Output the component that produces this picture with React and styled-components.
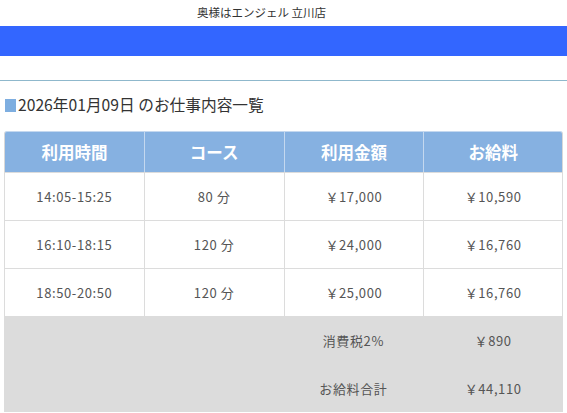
import React from "react";
import styled, { createGlobalStyle } from "styled-components";

const GlobalStyle = createGlobalStyle`
  body {
    margin: 0;
    background: #fff;
    font-family: "Noto Sans CJK JP", "Noto Sans", sans-serif;
    color: #333;
  }
`;

const ShopTitle = styled.div`
  height: 26px;
  padding-right: 44px;
  line-height: 24px;
  text-align: center;
  font-size: 11.5px;
  color: #333;
`;

const BlueBar = styled.div`
  height: 30px;
  background: #3366ff;
`;

const Divider = styled.hr`
  margin: 24px 0 0;
  border: 0;
  border-top: 1px solid #8fb8cc;
`;

const Heading = styled.h2`
  display: flex;
  align-items: center;
  margin: 13px 0 0 5px;
  font-size: 15.7px;
  font-weight: normal;
  line-height: 22px;
  color: #333;
`;

const Square = styled.span`
  width: 11px;
  height: 13px;
  margin-right: 2px;
  background: #7eaee0;
`;

const Table = styled.table`
  margin: 15px 0 0 4px;
  width: 559px;
  border-collapse: separate;
  border-spacing: 0;
  table-layout: fixed;
`;

const Th = styled.th`
  height: 40px;
  padding: 0;
  background: #86b1e1;
  color: #fff;
  font-size: 16.5px;
  font-weight: bold;
  border-left: 1px solid #c4d8ef;
  border-top: 1px solid #c4d8ef;

  &:first-child {
    border-left: 1px solid #d8d8d8;
    border-top-left-radius: 3px;
  }
  &:last-child {
    border-right: 1px solid #d8d8d8;
    border-top-right-radius: 3px;
  }
`;

const Td = styled.td`
  height: 47px;
  padding: 0;
  text-align: center;
  font-size: 13px;
  letter-spacing: 0.6px;
  color: #555;
  background: #fff;
  border-left: 1px solid #dcdcdc;
  border-top: 1px solid #dcdcdc;

  &:last-child {
    border-right: 1px solid #dcdcdc;
  }
`;

const SumTd = styled.td`
  height: 48px;
  padding: 0;
  text-align: center;
  font-size: 13px;
  letter-spacing: 0.6px;
  color: #555;
  background: #dcdcdc;
`;

const rows = [
  ["14:05-15:25", "80 分", "￥17,000", "￥10,590"],
  ["16:10-18:15", "120 分", "￥24,000", "￥16,760"],
  ["18:50-20:50", "120 分", "￥25,000", "￥16,760"],
];

const totals = [
  ["消費税2%", "￥890"],
  ["お給料合計", "￥44,110"],
];

export default function App() {
  return (
    <>
      <GlobalStyle />
      <ShopTitle>奥様はエンジェル 立川店</ShopTitle>
      <BlueBar />
      <Divider />
      <Heading>
        <Square />
        2026年01月09日 のお仕事内容一覧
      </Heading>
      <Table>
        <thead>
          <tr>
            <Th>利用時間</Th>
            <Th>コース</Th>
            <Th>利用金額</Th>
            <Th>お給料</Th>
          </tr>
        </thead>
        <tbody>
          {rows.map((r) => (
            <tr key={r[0]}>
              {r.map((c, i) => (
                <Td key={i}>{c}</Td>
              ))}
            </tr>
          ))}
          {totals.map(([label, value]) => (
            <tr key={label}>
              <SumTd />
              <SumTd />
              <SumTd>{label}</SumTd>
              <SumTd>{value}</SumTd>
            </tr>
          ))}
        </tbody>
      </Table>
    </>
  );
}
